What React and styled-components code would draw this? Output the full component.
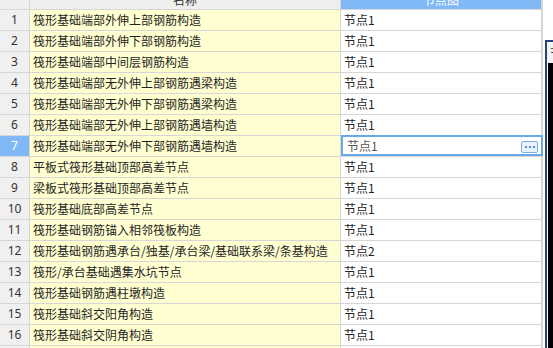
import React from "react";
import styled, { createGlobalStyle, css } from "styled-components";

const Global = createGlobalStyle`
  html, body { margin: 0; padding: 0; background: #ffffff; }
  body { font-family: "Microsoft YaHei", "Noto Sans CJK SC", sans-serif; font-size: 12px; }
`;

const Viewport = styled.div`
  position: relative;
  width: 553px;
  height: 348px;
  overflow: hidden;
  background: #ffffff;
`;

const Grid = styled.div`
  display: grid;
  grid-template-columns: 30px 311px 202px;
  width: 543px;
  margin-top: -9px;
  color: #222;
  font-family: "Microsoft YaHei", "Noto Sans CJK SC", sans-serif;
  font-size: 12px;
`;

const Cell = styled.div`
  box-sizing: border-box;
  height: 21px;
  line-height: 20px;
  border-bottom: 1px solid #d6d6d6;
  border-right: 1px solid #d6d6d6;
  white-space: nowrap;
  overflow: visible;
  position: relative;
`;

const HeadCell = styled(Cell)`
  height: 19px;
  line-height: 18px;
  text-align: center;
  background: ${(p) => (p.$active ? "#80b9f6" : "#efefef")};
  color: ${(p) => (p.$active ? "#ffffff" : "#333")};
  border-right-width: ${(p) => (p.$last ? "2px" : "1px")};
`;

const NumCell = styled(Cell)`
  text-align: center;
  background: ${(p) => (p.$active ? "#80b9f6" : "#f0f0f0")};
  color: ${(p) => (p.$active ? "#ffffff" : "#333")};
  font-family: "Segoe UI", "Noto Sans", "Microsoft YaHei", sans-serif;
`;

const NameCell = styled(Cell)`
  background: #ffffd2;
  padding-left: 3px;
  color: #1f1f1f;
`;

const NodeCell = styled(Cell)`
  background: #ffffff;
  padding-left: 3px;
  border-right-width: 2px;
  color: #1f1f1f;
  ${(p) =>
    p.$editing &&
    css`
      display: flex;
      align-items: center;
      justify-content: space-between;
      padding-left: 6px;
      padding-right: 3px;
      color: #555;
      &::after {
        content: "";
        position: absolute;
        box-sizing: border-box;
        top: -1px;
        bottom: 0;
        left: 0;
        right: -2px;
        border: 2px solid #6aa9ea;
        pointer-events: none;
      }
    `}
`;

const EllipsisButton = styled.button`
  box-sizing: border-box;
  width: 17px;
  height: 12px;
  padding: 0;
  margin-top: 1px;
  border: 1px solid #79aee6;
  border-radius: 2px;
  background: #e8f1fc;
  display: flex;
  align-items: center;
  justify-content: center;
  gap: 2px;
`;

const Dot = styled.span`
  width: 2px;
  height: 2px;
  background: #4d8fd6;
`;

const SideWindow = styled.div`
  position: absolute;
  left: 545px;
  top: 40px;
  width: 40px;
  height: 330px;
  box-sizing: border-box;
  border-left: 2px solid #25467a;
  border-top: 2px solid #25467a;
  background: #f3f3f3;
  display: flex;
  flex-direction: column;
`;

const SideTitle = styled.div`
  height: 21px;
  line-height: 21px;
  padding-left: 3px;
  font-size: 12px;
  color: #333;
  white-space: nowrap;
  font-family: "Microsoft YaHei", "Noto Sans CJK SC", sans-serif;
`;

const SideBody = styled.div`
  flex: 1;
  margin-left: 1px;
  background: #000000;
`;

const rows = [
  ["筏形基础端部外伸上部钢筋构造", "节点1"],
  ["筏形基础端部外伸下部钢筋构造", "节点1"],
  ["筏形基础端部中间层钢筋构造", "节点1"],
  ["筏形基础端部无外伸上部钢筋遇梁构造", "节点1"],
  ["筏形基础端部无外伸下部钢筋遇梁构造", "节点1"],
  ["筏形基础端部无外伸上部钢筋遇墙构造", "节点1"],
  ["筏形基础端部无外伸下部钢筋遇墙构造", "节点1"],
  ["平板式筏形基础顶部高差节点", "节点1"],
  ["梁板式筏形基础顶部高差节点", "节点1"],
  ["筏形基础底部高差节点", "节点1"],
  ["筏形基础钢筋锚入相邻筏板构造", "节点1"],
  ["筏形基础钢筋遇承台/独基/承台梁/基础联系梁/条基构造", "节点2"],
  ["筏形/承台基础遇集水坑节点", "节点1"],
  ["筏形基础钢筋遇柱墩构造", "节点1"],
  ["筏形基础斜交阳角构造", "节点1"],
  ["筏形基础斜交阴角构造", "节点1"],
  ["", ""],
];

const SELECTED = 7;

export default function App() {
  return (
    <>
      <Global />
      <Viewport>
        <Grid>
          <HeadCell />
          <HeadCell>名称</HeadCell>
          <HeadCell $active $last>节点图</HeadCell>
          {rows.map(([name, node], i) => {
            const n = i + 1;
            const sel = n === SELECTED;
            return (
              <React.Fragment key={n}>
                <NumCell $active={sel}>{name ? n : ""}</NumCell>
                <NameCell>{name}</NameCell>
                {sel ? (
                  <NodeCell $editing>
                    <span>{node}</span>
                    <EllipsisButton type="button" aria-label="more">
                      <Dot />
                      <Dot />
                      <Dot />
                    </EllipsisButton>
                  </NodeCell>
                ) : (
                  <NodeCell>{node}</NodeCell>
                )}
              </React.Fragment>
            );
          })}
        </Grid>
        <SideWindow>
          <SideTitle>节点图</SideTitle>
          <SideBody />
        </SideWindow>
      </Viewport>
    </>
  );
}
